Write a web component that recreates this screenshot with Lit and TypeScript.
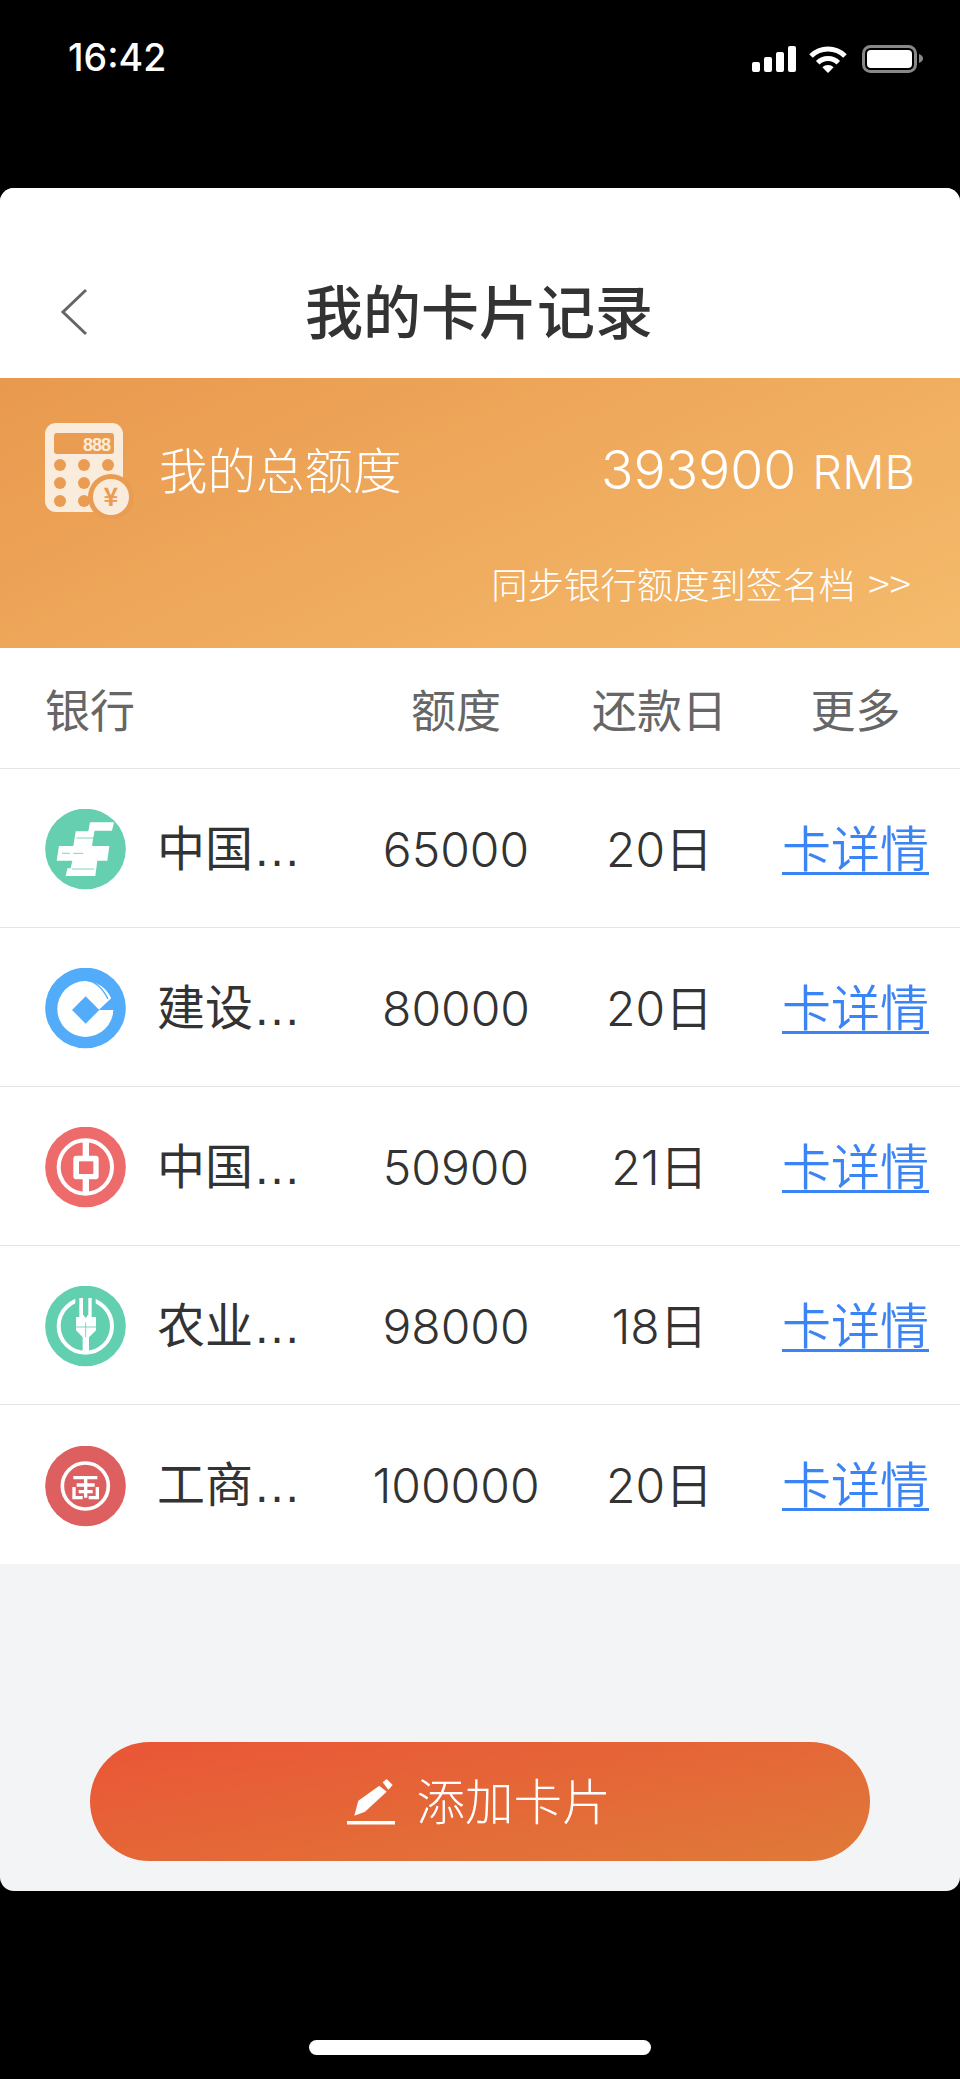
import { LitElement, html, css, svg } from "lit";
import { customElement } from "lit/decorators.js";

const icons = [
  svg`<circle cx="121.5" cy="120" r="121" fill="#65cfb0"/>
  <g transform="translate(-75,-57)">
    <path fill="#fff" d="M210 97H282L276 122H224L219 146L216 168H268L262 212H232L226 258H137L142 235H152L157 212H110L117 168H160L167 124H205Z"/>
    <path fill="none" stroke="#65cfb0" stroke-width="2.500" d="M170 144H219M126 190H150M160 190H190M155 237H222"/>
  </g>`,
  svg`<circle cx="121.5" cy="120" r="121" fill="#52acf9"/>
  <g transform="translate(-75,-533)">
    <circle cx="196" cy="656" r="84" fill="#fff"/>
    <path fill="#52acf9" d="M236 659L284 614L310 614V659Z"/>
    <path fill="#52acf9" d="M197 618L238 659L197 700L156 659Z"/>
    <path fill="none" stroke="#52acf9" stroke-width="4" d="M200 570C228 574 250 598 264 626"/>
  </g>`,
  svg`<circle cx="121.5" cy="120" r="121" fill="#ee6b6b"/>
  <g transform="translate(-75,-50)">
    <circle cx="196" cy="170" r="80" fill="none" stroke="#fff" stroke-width="12"/>
    <rect x="188" y="88" width="19" height="165" fill="#fff"/>
    <rect x="160" y="136" width="76" height="71" rx="9" fill="#fff"/>
    <rect x="177" y="153" width="43" height="38" fill="#ee6b6b"/>
  </g>`,
  svg`<circle cx="121.5" cy="120" r="121" fill="#62d0b0"/>
  <g transform="translate(-75,-527)">
    <circle cx="196" cy="647" r="80" fill="none" stroke="#fff" stroke-width="12"/>
    <rect x="166" y="555" width="61" height="50" fill="#62d0b0"/>
    <path fill="#fff" d="M178 563H215V620H228V660L207 681V728H188V681L168 660V620H178Z"/>
    <path fill="#62d0b0" d="M189 563H205V612L197 624L189 612Z"/>
    <path fill="none" stroke="#62d0b0" stroke-width="2.500" d="M168 650H228M197 636V681"/>
  </g>`,
  svg`<circle cx="121.5" cy="120" r="121" fill="#dd5f5f"/>
  <g transform="translate(-75,-1005)">
    <circle cx="196" cy="1125" r="69" fill="none" stroke="#fff" stroke-width="11"/>
    <path fill="none" stroke="#fff" stroke-width="10" d="M160 1100H232M197 1100V1160M170 1122H224M162 1128V1160H188M232 1128V1160H206M176 1142H218"/>
  </g>`,
];

const rows = [
  ["中国…", "65000", "20日"],
  ["建设…", "80000", "20日"],
  ["中国…", "50900", "21日"],
  ["农业…", "98000", "18日"],
  ["工商…", "100000", "20日"],
];

@customElement("app-root")
export class AppRoot extends LitElement {
  static styles = css`
    :host {
      display: block;
      width: 960px;
      height: 2079px;
      background: #000;
      font-family: Inter, "Noto Sans CJK SC", sans-serif;
      color: #333;
    }
    .page { display: flex; flex-direction: column; height: 2079px; }
    .status {
      height: 188px;
      flex: none;
      display: flex;
      justify-content: space-between;
      align-items: flex-start;
      box-sizing: border-box;
      padding: 37px 37px 0 68px;
      color: #fff;
    }
    .status svg { margin-top: 8px; display: block; }
    .time { font: 500 37.5px/42px Inter, sans-serif; }
    .card {
      height: 1703px;
      flex: none;
      background: #f3f4f6;
      border-radius: 14px;
      overflow: hidden;
      display: flex;
      flex-direction: column;
    }
    .head {
      height: 190px;
      flex: none;
      background: #fff;
      display: grid;
      grid-template-columns: 1fr auto 1fr;
      align-items: end;
      box-sizing: border-box;
      padding: 0 0 34px;
    }
    .back { margin: 0 0 8px 60px; display: block; }
    .title { font: 500 58px/70px "Noto Sans CJK SC", sans-serif; color: #333; margin-right: 2px; }
    .banner {
      height: 270px;
      flex: none;
      box-sizing: border-box;
      background: linear-gradient(155deg, #e9994e 0%, #f5bb6c 100%);
      color: #fff;
      padding: 45px 45px 0 45px;
    }
    .top { display: flex; align-items: center; }
    .top svg { display: block; flex: none; }
    .total { font: 300 48.5px/70px "Noto Sans CJK SC", sans-serif; margin: 0 0 7px 24px; flex: 1; }
    .amount { font: 350 53.5px/70px Inter, sans-serif; }
    .rmb { font: 350 47px/70px Inter, sans-serif; margin-left: 16px; }
    .sync { font: 300 36.4px/50px "Noto Sans CJK SC", sans-serif; text-align: right; margin: 38px 4px 0 0; }
    .sync span { font-size: 40px; margin-left: 13px; }
    .grid {
      display: grid;
      grid-template-columns: 346px 220px 187px 205px;
      align-items: center;
      background: #fff;
      border-bottom: 1px solid #e4e4e4;
      text-align: center;
    }
    .th { height: 121px; color: #666; font-size: 45px; box-sizing: border-box; }
    .th .c1 { text-align: left; padding-left: 45px; }
    .tr { height: 159px; font-size: 48px; line-height: 60px; box-sizing: border-box; padding-top: 3px; font-weight: 350; }
    .tr.last { border-bottom: 0; }
    .name { display: flex; align-items: center; gap: 31px; padding-left: 45px; text-align: left; font-family: "Liberation Sans", "Noto Sans CJK SC", sans-serif; font-weight: 400; }
    .name svg { display: block; flex: none; }
    .num { font-size: 48px; }
    a { color: #3a84f5; font-size: 49px; text-decoration: underline; text-underline-offset: 5px; text-decoration-thickness: 3px; }
    .foot { flex: 1; display: flex; align-items: flex-end; justify-content: center; padding-bottom: 30px; }
    .btn {
      width: 780px;
      height: 119px;
      border-radius: 60px;
      background: linear-gradient(170deg, #ea5536 0%, #df7a39 100%);
      color: #fff;
      display: flex;
      align-items: center;
      justify-content: center;
      gap: 21px;
      font: 300 48.5px/60px "Noto Sans CJK SC", sans-serif;
      padding-right: 2px;
      box-sizing: border-box;
    }
    .btn span { margin: 0 0 6px; }
    .btn svg { display: block; }
    .bottom { flex: 1; display: flex; align-items: flex-end; justify-content: center; padding-bottom: 24px; }
    .indicator { width: 342px; height: 15px; border-radius: 8px; background: #fff; }
  `;

  render() {
    return html`<div class="page">
      <div class="status">
        <div class="time">16:42</div>
        <svg width="171" height="30" viewBox="752 45 171 30">
          <g fill="#fff">
            <rect x="752" y="62" width="8" height="10" rx="2"/>
            <rect x="764" y="57" width="8" height="15" rx="2"/>
            <rect x="776" y="52" width="8" height="20" rx="2"/>
            <rect x="788" y="46" width="8" height="26" rx="2"/>
            <path d="M822.300 67.300A8 8 0 0 1 833.700 67.300L828 73Z"/>
          </g>
          <path d="M811 56A24 24 0 0 1 845 56M817.700 62.700A14.500 14.500 0 0 1 838.300 62.700" fill="none" stroke="#fff" stroke-width="5"/>
          <rect x="863.500" y="46.500" width="52" height="25" rx="7" fill="none" stroke="#888" stroke-width="3"/>
          <rect x="867" y="50" width="45" height="18" rx="4" fill="#fff"/>
          <path d="M919 54C922 55 923 57 923 58.500S922 62 919 63Z" fill="#888"/>
        </svg>
      </div>
      <div class="card">
        <div class="head">
          <svg class="back" width="28" height="48" viewBox="0 0 28 48"><path d="M26 2L3 24L26 46" fill="none" stroke="#666" stroke-width="3"/></svg>
          <div class="title">我的卡片记录</div>
          <div></div>
        </div>
        <div class="banner">
          <div class="top">
            <svg width="90" height="96" viewBox="45 423 90 96">
              <rect x="45" y="423" width="78" height="89" rx="11" fill="#faecdc"/>
              <rect x="54" y="433" width="60" height="21" rx="3" fill="#ea9c52"/>
              <text x="110" y="451" text-anchor="end" font-family="Liberation Sans" font-weight="700" font-size="18" fill="#faecdc" letter-spacing="-1">888</text>
              <g fill="#ea9c52">
                <circle cx="60" cy="465" r="6"/><circle cx="84" cy="465" r="6"/><circle cx="108" cy="465" r="6"/>
                <circle cx="60" cy="483" r="6"/><circle cx="84" cy="483" r="6"/><circle cx="108" cy="483" r="6"/>
                <circle cx="60" cy="501" r="6"/><circle cx="84" cy="501" r="6"/>
                <circle cx="111" cy="497" r="23"/>
              </g>
              <circle cx="111" cy="497" r="18" fill="#faecdc"/>
              <text x="111" y="506" text-anchor="middle" font-family="Noto Sans CJK SC" font-weight="700" font-size="25" fill="#ea9c52">¥</text>
            </svg>
            <div class="total">我的总额度</div>
            <div><span class="amount">393900</span><span class="rmb">RMB</span></div>
          </div>
          <div class="sync">同步银行额度到签名档<span>&gt;&gt;</span></div>
        </div>
        <div class="grid th">
          <div class="c1">银行</div><div>额度</div><div>还款日</div><div>更多</div>
        </div>
        ${rows.map(
          (r, i) => html`<div class="grid tr ${i === rows.length - 1 ? "last" : ""}">
            <div class="name"><svg width="81" height="81" viewBox="0 0 243 243">${icons[i]}</svg><span>${r[0]}</span></div>
            <div class="num">${r[1]}</div>
            <div>${r[2]}</div>
            <div><a>卡详情</a></div>
          </div>`
        )}
        <div class="foot">
          <div class="btn">
            <svg width="48" height="46" viewBox="0 0 48 46">
              <path fill="#fff" d="M7.300 36.700L11.300 21.700L32.300 6.700L39.700 12.700L18 32.700Z"/>
              <path fill="#fff" d="M35.700 3.300L39.700 0L45.700 6L41.300 10.700Z"/>
              <rect y="42" width="48" height="3.500" fill="#fff"/>
            </svg>
            <span>添加卡片</span>
          </div>
        </div>
      </div>
      <div class="bottom"><div class="indicator"></div></div>
    </div>`;
  }
}
